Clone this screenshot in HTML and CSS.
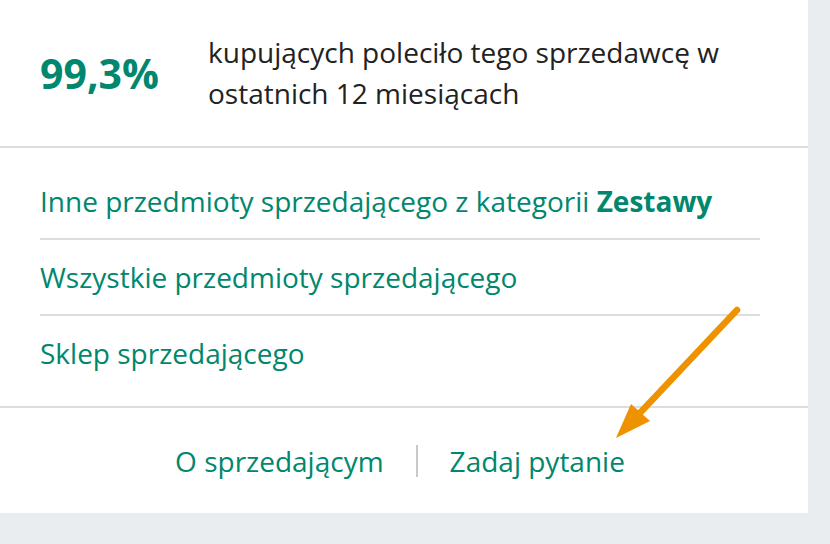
FILE: index.html
```html
<!DOCTYPE html>
<html lang="pl">
<head>
<meta charset="utf-8">
<title>Sprzedający</title>
<link rel="stylesheet" href="styles.css">
</head>
<body>
<div class="card">
  <section class="rating">
    <div class="rating-value">99,3%</div>
    <p class="rating-text">kupujących poleciło tego sprzedawcę w ostatnich 12 miesiącach</p>
  </section>
  <ul class="links">
    <li class="link-row"><a href="#">Inne przedmioty sprzedającego z kategorii <b>Zestawy</b></a></li>
    <li class="link-row"><a href="#">Wszystkie przedmioty sprzedającego</a></li>
    <li class="link-row"><a href="#">Sklep sprzedającego</a></li>
  </ul>
  <nav class="footer">
    <a href="#" class="footer-link">O sprzedającym</a>
    <a href="#" class="footer-link footer-link-sep">Zadaj pytanie</a>
  </nav>
  <svg class="arrow" width="808" height="513" viewBox="0 0 808 513" aria-hidden="true">
    <line x1="737" y1="310" x2="638" y2="415" stroke="#ef9200" stroke-width="6.5" stroke-linecap="round"/>
    <polygon points="616,438 631,404 650,421" fill="#ef9200"/>
  </svg>
</div>
</body>
</html>
```
FILE: styles.css
```css
html, body {
  margin: 0;
  padding: 0;
  background: #eaedf0;
}
body {
  font-family: "Open Sans", "Noto Sans", sans-serif;
  color: #222222;
  width: 830px;
  height: 544px;
  overflow: hidden;
}
.card {
  position: relative;
  width: 808px;
  height: 513px;
  background: #ffffff;
  display: flex;
  flex-direction: column;
}
.rating {
  display: flex;
  align-items: center;
  height: 146px;
  padding: 0 40px;
  border-bottom: 2px solid #dddddd;
  flex: none;
}
.rating-value {
  width: 168px;
  flex: none;
  font-size: 41px;
  font-weight: 700;
  color: #00876d;
}
.rating-text {
  margin: 0;
  font-size: 28px;
  line-height: 41px;
}
.links {
  list-style: none;
  margin: 0;
  padding: 16px 48px 16px 40px;
  border-bottom: 2px solid #dddddd;
}
.link-row {
  padding: 18px 0;
  line-height: 38px;
  font-size: 28px;
}
.link-row + .link-row {
  border-top: 2px solid #dddddd;
}
.link-row a {
  color: #00876d;
  text-decoration: none;
}
.link-row b {
  font-weight: 700;
}
.footer {
  flex: 1;
  display: flex;
  justify-content: center;
  align-items: center;
  padding-right: 8px;
}
.footer-link {
  font-size: 28px;
  line-height: 32px;
  color: #00876d;
  text-decoration: none;
  padding: 0 32px;
}
.footer-link-sep {
  border-left: 2px solid #c9c9c9;
}
.arrow {
  position: absolute;
  left: 0;
  top: 0;
  pointer-events: none;
}
```
